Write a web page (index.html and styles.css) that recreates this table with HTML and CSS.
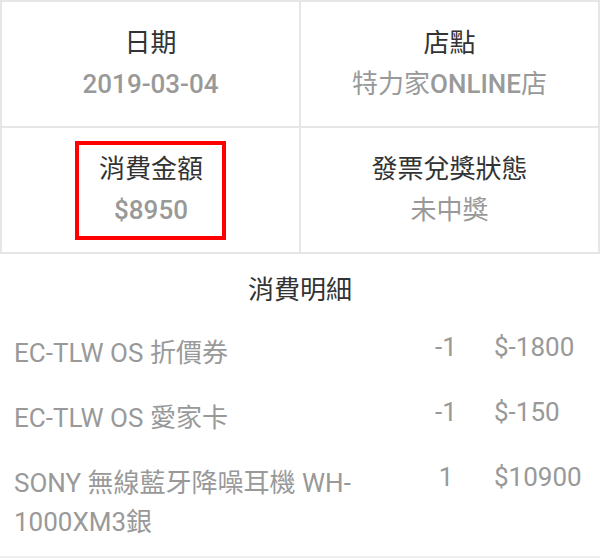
FILE: index.html
```html
<!DOCTYPE html>
<html lang="zh-Hant">
<head>
    <meta charset="UTF-8">
    <meta name="viewport" content="width=device-width, initial-scale=1.0">
    <title>發票明細</title>
    <link rel="stylesheet" href="styles.css">
</head>
<body>
    <div class="summary">
        <div class="cell">
            <div class="label">日期</div>
            <div class="value">2019-03-04</div>
        </div>
        <div class="cell">
            <div class="label">店點</div>
            <div class="value"><span class="cjk">特力家</span>ONLINE<span class="cjk">店</span></div>
        </div>
        <div class="cell">
            <div class="highlight">
                <div class="label">消費金額</div>
                <div class="value">$8950</div>
            </div>
        </div>
        <div class="cell">
            <div class="label">發票兌獎狀態</div>
            <div class="value"><span class="cjk">未中獎</span></div>
        </div>
    </div>

    <h2 class="detail-title">消費明細</h2>

    <div class="item-list">
        <div class="item">
            <div class="item-name">EC-TLW OS 折價券</div>
            <div class="item-qty">-1</div>
            <div class="item-price">$-1800</div>
        </div>
        <div class="item">
            <div class="item-name">EC-TLW OS 愛家卡</div>
            <div class="item-qty">-1</div>
            <div class="item-price">$-150</div>
        </div>
        <div class="item">
            <div class="item-name">SONY 無線藍牙降噪耳機 WH-1000XM3銀</div>
            <div class="item-qty">1</div>
            <div class="item-price">$10900</div>
        </div>
    </div>

    <div class="footer-line"></div>
</body>
</html>
```

FILE: styles.css
```css
body {
    margin: 0;
    font-family: Roboto, "Noto Sans CJK TC", sans-serif;
    font-size: 26px;
    background: #ffffff;
    color: #333;
}

.summary {
    display: grid;
    grid-template-columns: 1fr 1fr;
    border-top: 2px solid #e6e6e6;
    border-left: 2px solid #e6e6e6;
}

.cell {
    height: 124px;
    display: flex;
    flex-direction: column;
    align-items: center;
    justify-content: center;
    border-right: 2px solid #e6e6e6;
    border-bottom: 2px solid #e6e6e6;
    text-align: center;
    line-height: 41px;
}

.label {
    color: #333;
}

.value {
    color: #999;
    font-weight: 500;
}

.value .cjk {
    font-weight: normal;
}

.highlight {
    border: 4px solid #ff0000;
    padding: 4px 19px 5px 20px;
}

.detail-title {
    margin: 16px 0 0;
    font-size: 26px;
    font-weight: normal;
    line-height: 41px;
    text-align: center;
    color: #333;
}

.item-list {
    padding: 17px 6px 14px 14px;
    display: flex;
    flex-direction: column;
    gap: 20px;
    color: #999;
    line-height: 39px;
}

.item {
    display: grid;
    grid-template-columns: 1fr 96px 100px;
    align-items: start;
}

.item-name {
    padding-top: 6px;
}

.item-qty {
    text-align: center;
}

.footer-line {
    border-top: 2px solid #eeeeee;
}
```
